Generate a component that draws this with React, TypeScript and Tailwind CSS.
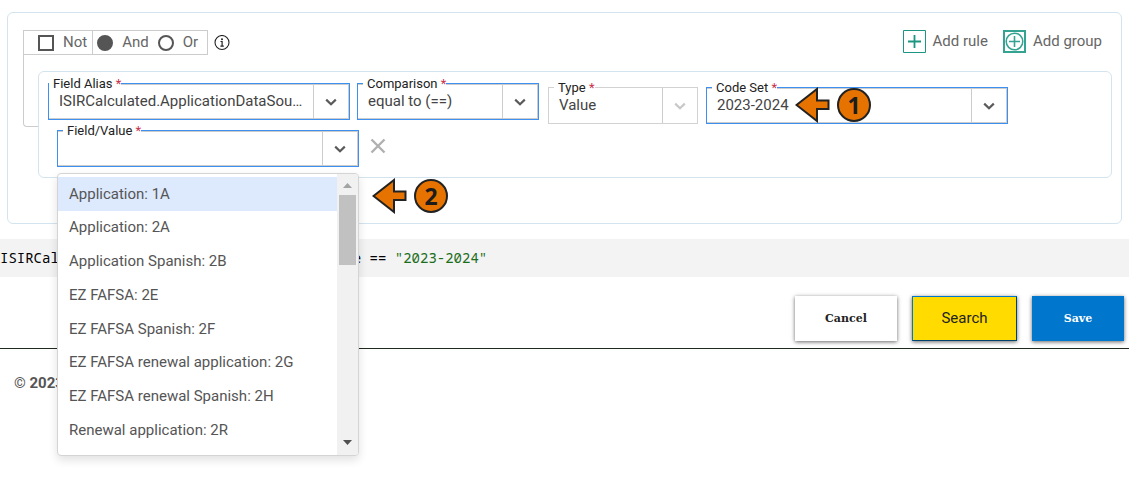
import React from "react";

const options = [
  "Application: 1A",
  "Application: 2A",
  "Application Spanish: 2B",
  "EZ FAFSA: 2E",
  "EZ FAFSA Spanish: 2F",
  "EZ FAFSA renewal application: 2G",
  "EZ FAFSA renewal Spanish: 2H",
  "Renewal application: 2R",
];

function Chevron() {
  return (
    <svg className="h-3 w-3" viewBox="0 0 12 12" fill="none" stroke="currentColor" strokeWidth="2.2">
      <path d="M1.2 3.6 6 8.2l4.8-4.6" />
    </svg>
  );
}

function FieldLabel({ id, text, near }: { id: string; text: string; near?: boolean }) {
  return (
    <label
      htmlFor={id}
      className={`absolute -top-2 z-10 bg-white pl-1 text-[13px] leading-4 whitespace-nowrap text-[#222] ${
        near ? "left-0" : "left-[5px]"
      }`}
    >
      {text} <span className="text-[#c8324a]">*</span>
    </label>
  );
}

interface SelectFieldProps {
  id: string;
  label: string;
  value: string;
  width: string;
  near?: boolean;
  disabled?: boolean;
  children?: React.ReactNode;
}

function SelectField({ id, label, value, width, near, disabled, children }: SelectFieldProps) {
  return (
    <div className={`relative h-[37px] border ${width} ${disabled ? "border-[#d2d2d2]" : "border-[#3d8ff0]"}`}>
      <FieldLabel id={id} text={label} near={near} />
      <div className={`flex h-full ${disabled ? "" : "border-t border-r border-b border-[#ccc]"}`}>
        <select
          id={id}
          disabled={disabled}
          className="min-w-0 flex-1 appearance-none truncate bg-transparent pr-2 pl-[10px] text-[15px] text-[#444] opacity-100 outline-none"
        >
          <option>{value}</option>
        </select>
        <span
          className={`flex w-[35px] items-center justify-center border-l border-[#ccc] ${
            disabled ? "text-[#c8c8c8]" : "text-[#5a5a5a]"
          }`}
        >
          <Chevron />
        </span>
      </div>
      {children}
    </div>
  );
}

function Marker({ n, place }: { n: number; place: string }) {
  return (
    <div className={`absolute z-20 flex items-center gap-[7px] ${place}`}>
      <svg className="h-9 w-[35px]" viewBox="0 0 35 36">
        <path d="M1.5 18 22 2v11.500h11.500v8.500H22v12Z" fill="#e67300" stroke="#222" strokeWidth="2" />
      </svg>
      <span className="flex h-[34px] w-[34px] items-center justify-center rounded-full border-2 border-[#222] bg-[#e67300] font-['Noto_Sans',sans-serif] text-[23px] leading-none font-bold text-[#1c1c1c]">
        {n}
      </span>
    </div>
  );
}

function OptionMenu() {
  return (
    <div className="absolute top-[42px] -right-px -left-px z-30 flex h-[283px] overflow-hidden rounded border border-[#d4d4d4] bg-white shadow-[0_4px_10px_rgba(0,0,0,0.12)]">
      <ul id="field-value-list" role="listbox" aria-label="Field/Value" className="mt-[3px] grid h-[270px] flex-1 grid-rows-8">
        {options.map((option, i) => (
          <li
            key={option}
            role="option"
            aria-selected={i === 0}
            className={`flex items-center pl-[11px] text-[15px] text-[#555] ${i === 0 ? "bg-[#dde9fd]" : ""}`}
          >
            {option}
          </li>
        ))}
      </ul>
      <div className="flex w-[21px] flex-col items-center bg-[#f1f1f1] py-2">
        <svg className="h-[9px] w-[9px]" viewBox="0 0 9 9">
          <path d="M0 6h9L4.500 1Z" fill="#a3a3a3" />
        </svg>
        <div className="mt-1 h-[70px] w-[17px] bg-[#c1c1c1]" />
        <svg className="mt-auto h-[9px] w-[9px]" viewBox="0 0 9 9">
          <path d="M0 2h9L4.500 7Z" fill="#505050" />
        </svg>
      </div>
    </div>
  );
}

export default function App() {
  return (
    <div className="min-h-screen bg-white pt-3 font-[Roboto,sans-serif] text-[15px] text-[#666]">
      <section className="mr-[7px] ml-[7px] h-[212px] rounded-md border border-[#d3e4ef] px-[15px] pt-4">
        <div className="flex items-start justify-between pr-1">
          <div className="flex items-center gap-1.5 pt-px">
            <div className="flex h-[25px] border border-[#ccc]">
              <label className="flex items-center gap-[9px] border-r border-[#ccc] pr-[5px] pl-[14px]">
                <input type="checkbox" className="h-4 w-4 appearance-none border-2 border-[#555]" />
                Not
              </label>
              <label className="flex items-center gap-[9px] pl-1">
                <input
                  type="radio"
                  name="join"
                  defaultChecked
                  className="h-4 w-4 appearance-none rounded-full border-2 border-[#555] checked:bg-[#555]"
                />
                And
              </label>
              <label className="flex items-center gap-[9px] pr-[9px] pl-[9px]">
                <input
                  type="radio"
                  name="join"
                  className="h-4 w-4 appearance-none rounded-full border-2 border-[#555] checked:bg-[#555]"
                />
                Or
              </label>
            </div>
            <svg className="h-4 w-4" viewBox="0 0 16 16" fill="none" stroke="#222">
              <circle cx="8" cy="7.500" r="7" strokeWidth="1.1" />
              <circle cx="8" cy="4.200" r="1" fill="#222" stroke="none" />
              <path d="M6.500 6.500H8.100V11M6.400 11.200h3.400" strokeWidth="1.2" />
            </svg>
          </div>
          <div className="flex gap-[15px]">
            <button type="button" className="flex items-center gap-[7px] pt-px">
              <svg className="h-[23px] w-[23px]" viewBox="0 0 23 23" fill="none" stroke="#1c9682">
                <path d="M.5.5h22v22H.5z" />
                <path d="M11.500 5v13M5 11.500h13" strokeWidth="1.800" />
              </svg>
              Add rule
            </button>
            <button type="button" className="flex items-center gap-[7px] pt-px">
              <svg className="h-[23px] w-[23px]" viewBox="0 0 23 23" fill="none" stroke="#35a392">
                <path d="M1 1h21v21H1z" strokeWidth="2" />
                <circle cx="11.500" cy="11.500" r="8.300" strokeWidth="1.500" />
                <path d="M11.500 6v11M6 11.500h11" strokeWidth="1.600" />
              </svg>
              Add group
            </button>
          </div>
        </div>

        <div className="flex items-start">
          <div className="h-[72px] w-[15px] shrink-0 rounded-bl border-b border-l border-[#ccc]" />
          <div className="mt-4 mr-[-6px] h-[107px] min-w-0 flex-1 rounded-md border border-[#d3e4ef] pt-[11px]">
            <div className="flex items-start pl-[9px]">
              <SelectField
                id="alias"
                label="Field Alias"
                value="ISIRCalculated.ApplicationDataSourceSetCode"
                width="w-[302px]"
                near
              />
              <div className="ml-[7px]">
                <SelectField id="comparison" label="Comparison" value="equal to (==)" width="w-[182px]" />
              </div>
              <div className="mt-1 ml-[9px]">
                <SelectField id="type" label="Type" value="Value" width="w-[150px]" disabled />
              </div>
              <div className="mt-1 ml-2">
                <SelectField id="codeset" label="Code Set" value="2023-2024" width="w-[302px]">
                  <Marker n={1} place="-top-px left-[88px]" />
                </SelectField>
              </div>
            </div>
            <div className="mt-1.5 flex items-start pl-[18px]">
              <div className="relative h-[37px] w-[302px] border border-[#3d8ff0]">
                <FieldLabel id="field-value" text="Field/Value" />
                <div className="flex h-full border-t border-r border-b border-[#ccc]">
                  <input
                    id="field-value"
                    role="combobox"
                    aria-expanded="true"
                    aria-controls="field-value-list"
                    className="min-w-0 flex-1 bg-transparent px-[10px] outline-none"
                  />
                  <button
                    type="button"
                    aria-label="Toggle options"
                    className="flex w-[35px] items-center justify-center border-l border-[#ccc] text-[#5a5a5a]"
                  >
                    <Chevron />
                  </button>
                </div>
                <OptionMenu />
                <Marker n={2} place="top-[47px] left-[314px]" />
              </div>
              <button type="button" aria-label="Remove rule" className="mt-2 ml-[11px]">
                <svg className="h-4 w-4" viewBox="0 0 16 16" stroke="#b0b0b0" strokeWidth="2.400">
                  <path d="M1.500 1.500l13 13M14.500 1.500l-13 13" />
                </svg>
              </button>
            </div>
          </div>
        </div>
      </section>

      <pre className="mt-[15px] overflow-hidden bg-[#f3f3f3] font-['Noto_Sans_Mono','Liberation_Mono',monospace] text-[14px] leading-[38px] text-black">
        ISIRCalculated.ApplicationDataSourceSetCode == <span className="text-[#1b6e1b]">"2023-2024"</span>
      </pre>

      <div className="mt-[19px] flex justify-end gap-[15px] pr-[5px] pb-[7px]">
        <button
          type="button"
          className="h-[45px] w-[102px] bg-white pt-0.5 font-['Roboto_Slab','DejaVu_Serif',serif] text-[11px] font-bold text-[#222] shadow-[0_1px_4px_rgba(0,0,0,0.6)]"
        >
          Cancel
        </button>
        <button
          type="button"
          className="h-[45px] w-[105px] border border-t-[#0077cc] border-r-[#00446e] border-b-[#00446e] border-l-[#0077cc] bg-[#ffdb00] text-[15px] text-[#222] shadow-[0_1px_4px_rgba(0,0,0,0.6)]"
        >
          Search
        </button>
        <button
          type="button"
          className="h-[45px] w-[92px] bg-[#0077cc] pt-0.5 font-['Roboto_Slab','DejaVu_Serif',serif] text-[11px] font-bold text-white shadow-[0_1px_4px_rgba(0,0,0,0.6)]"
        >
          Save
        </button>
      </div>

      <footer className="border-t border-[#1e2a1e] px-[14px] pt-6 pb-4 text-[15px] leading-5 text-[#555]">
        © <strong>2023</strong>
      </footer>
    </div>
  );
}
